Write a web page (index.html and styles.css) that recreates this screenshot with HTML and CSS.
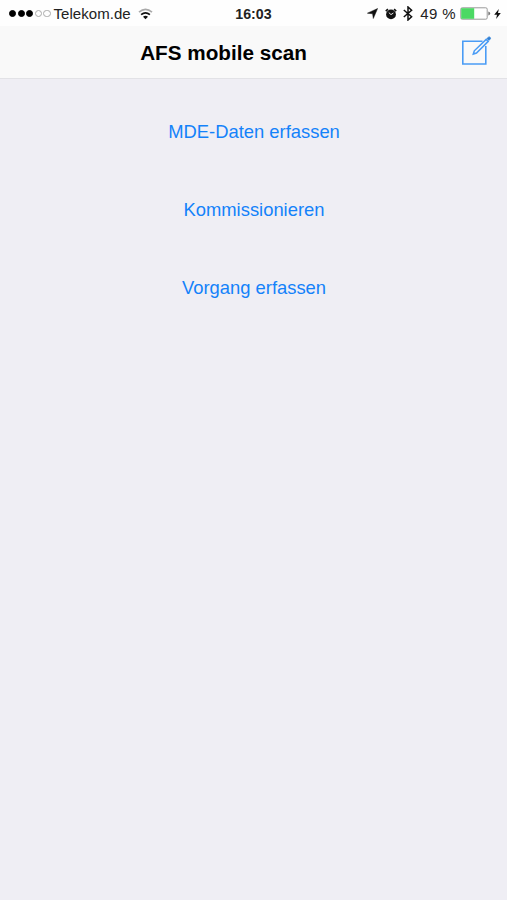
FILE: index.html
```
<!DOCTYPE html>
<html lang="de">
<head>
    <meta charset="UTF-8">
    <meta name="viewport" content="width=device-width, initial-scale=1.0">
    <title>AFS mobile scan</title>
    <link rel="stylesheet" href="styles.css">
</head>
<body>
    <div class="status-bar">
        <div class="status-left">
            <div class="signal">
                <span class="dot full"></span>
                <span class="dot full"></span>
                <span class="dot full"></span>
                <span class="dot"></span>
                <span class="dot"></span>
            </div>
            <span class="carrier">Telekom.de</span>
            <svg class="wifi" width="15" height="12" viewBox="0 0 15 12" fill="none" stroke-width="1.7">
                <path d="M1 4.2Q7.5 -1.4 14 4.2" stroke="#aaa"/>
                <path d="M3.1 6.6Q7.5 3 11.9 6.6" stroke="#111"/>
                <path d="M5 8.8Q7.5 6.9 10 8.8L7.5 11.3Z" fill="#111"/>
            </svg>
        </div>
        <span class="time">16:03</span>
        <div class="status-right">
            <svg class="location" width="11" height="11" viewBox="0 0 11 11">
                <path d="M10.6 .5L6.3 10.5L5.6 5.8L.4 5.2Z" fill="#111" stroke="#111" stroke-width=".5"/>
            </svg>
            <svg class="alarm" width="12" height="12" viewBox="0 0 12 12">
                <circle cx="6" cy="6.4" r="4.9" fill="#111"/>
                <path d="M.8 3.2L2.9 1.2M9.1 1.2L11.2 3.2" stroke="#111" stroke-width="1.6"/>
                <path d="M3.8 4.6L6 6.6L8.4 5" fill="none" stroke="#fff" stroke-width=".9"/>
            </svg>
            <svg class="bluetooth" width="10" height="15" viewBox="0 0 10 15" fill="none" stroke="#111" stroke-width="1.5">
                <path d="M.8 4L8.6 10.8L5 14V1L8.6 4.2L.8 11"/>
            </svg>
            <span class="percent">49 %</span>
            <svg class="battery" width="31" height="13" viewBox="0 0 31 13">
                <rect x=".8" y=".8" width="26.4" height="11.4" rx="1.4" fill="#fff" stroke="#999" stroke-width="1"/>
                <rect x="1.2" y="1.2" width="13" height="10.6" fill="#4cd964"/>
                <path d="M28.3 4.4Q30.2 4.8 30.2 6.5T28.3 8.6Z" fill="#777"/>
            </svg>
            <svg class="charging" width="7" height="10" viewBox="0 0 7 10">
                <path d="M4.8 0L.2 5.7H3L2.1 10L6.8 4.1H4Z" fill="#111"/>
            </svg>
        </div>
    </div>
    <div class="nav-bar">
        <h1>AFS mobile scan</h1>
        <button class="compose" aria-label="Neu">
            <svg width="31" height="30" viewBox="0 0 31 30" fill="none" stroke="#4a9cf5" stroke-width="1.6">
                <path d="M21.5 5.3H1.8V28H24.8V10"/>
                <path d="M12.3 18L13.3 14.8L25.2 3.4L27.2 5.4L15.5 17Z" stroke-width="1.5"/>
                <path d="M26 2.5L27.4 1.2Q28.4 .5 29.2 1.4T29.1 3.2L27.9 4.4Z" fill="#2f7fd4" stroke="#2f7fd4" stroke-width=".8"/>
            </svg>
        </button>
    </div>
    <div class="menu">
        <a href="#">MDE-Daten erfassen</a>
        <a href="#">Kommissionieren</a>
        <a href="#">Vorgang erfassen</a>
    </div>
</body>
</html>
```

FILE: styles.css
```
body {
    margin: 0;
    min-height: 100vh;
    background: #efeef4;
    font-family: "Liberation Sans", Arial, sans-serif;
    color: #000;
}
.status-bar {
    display: grid;
    grid-template-columns: 1fr auto 1fr;
    align-items: center;
    height: 26px;
    padding: 1px 6px 0 9px;
    box-sizing: border-box;
    background: #fefefe;
    font-size: 15px;
    color: #222;
}
.status-left,
.status-right,
.signal {
    display: flex;
    align-items: center;
}
.signal {
    gap: 1.4px;
}
.dot {
    width: 7.2px;
    height: 7.2px;
    box-sizing: border-box;
    border: 1px solid #aaa;
    border-radius: 50%;
}
.dot.full {
    background: #000;
    border-color: #000;
}
.carrier {
    margin-left: 3px;
    letter-spacing: 0.05px;
}
.wifi {
    margin-left: 7px;
}
.time {
    margin-right: 3px;
    font-size: 14.2px;
    font-weight: bold;
}
.status-right {
    justify-content: flex-end;
}
.alarm {
    margin-left: 7px;
}
.bluetooth {
    margin-left: 6px;
}
.percent {
    margin-left: 7px;
    letter-spacing: 0.4px;
}
.battery {
    margin-left: 4px;
}
.charging {
    margin-left: 3px;
}
.nav-bar {
    display: grid;
    grid-template-columns: 1fr auto 1fr;
    align-items: center;
    height: 53px;
    padding: 0 15px;
    box-sizing: border-box;
    background: #f9f9f9;
    border-bottom: 1px solid #e2e2e6;
}
h1 {
    grid-column: 2;
    margin: 2px 0 0 -60px;
    font-size: 20.7px;
    line-height: 24px;
}
.compose {
    justify-self: end;
    height: 30px;
    margin-bottom: 3px;
    padding: 0;
    border: 0;
    background: none;
}
.menu {
    display: flex;
    flex-direction: column;
    align-items: center;
    gap: 54px;
    padding: 41px 0 0 1px;
}
.menu a {
    font-size: 18.4px;
    line-height: 24px;
    color: #1482fa;
    text-decoration: none;
}
```
